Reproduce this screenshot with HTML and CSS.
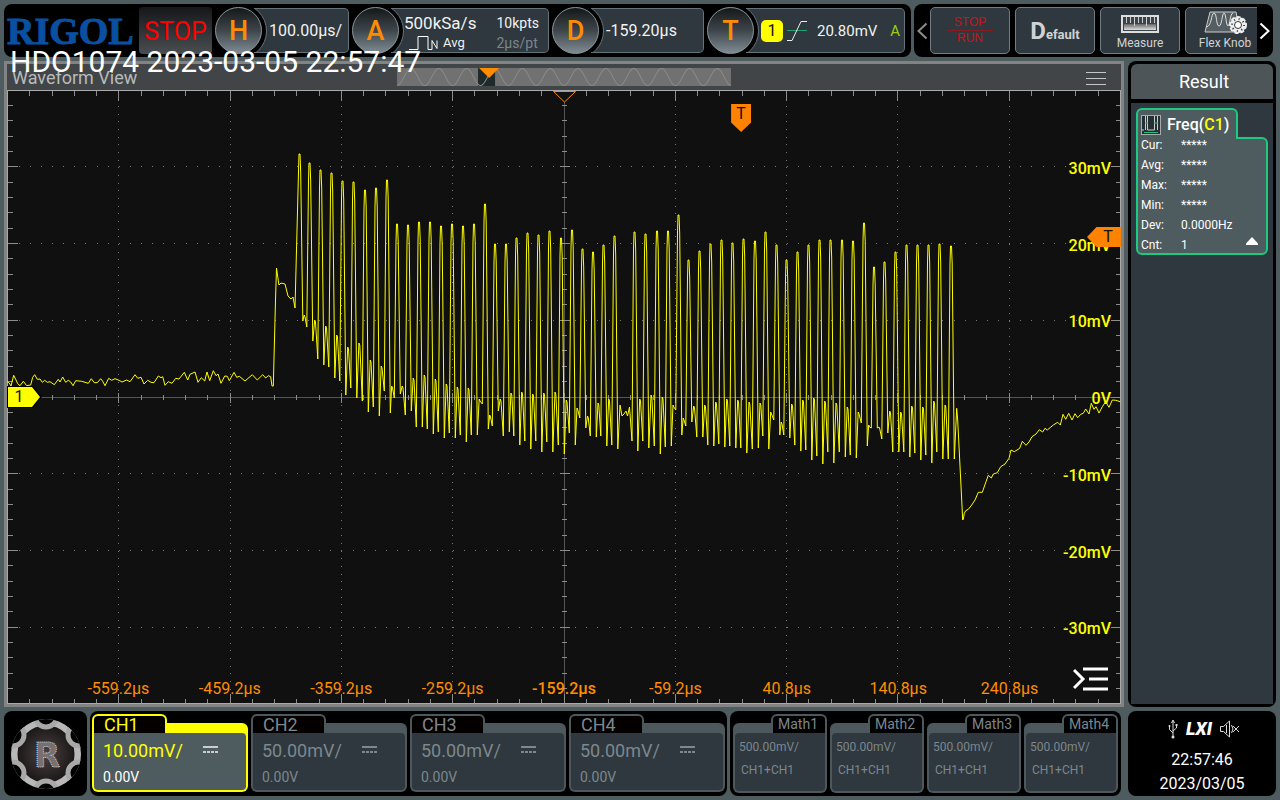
FILE: index.html
```html
<!DOCTYPE html>
<html lang="en">
<head>
<meta charset="utf-8">
<title>RIGOL HDO1074</title>
<link rel="stylesheet" href="styles.css">
</head>
<body>
<div class="stamp">HDO1074 2023-03-05 22:57:47</div>

<header class="top">
  <div class="bar settings">
    <span class="brand">RIGOL</span>
    <button class="run-state">STOP</button>
    <button class="unit"><span class="knob">H</span><span class="panel"><span>100.00µs/</span></span></button>
    <button class="unit"><span class="knob">A</span><span class="panel acquire">
      <span class="rate">500kSa/s</span><span class="depth">10kpts</span>
      <span class="mode"><svg width="30" height="16" viewBox="0 0 30 16"><path d="M0 14.500h9v-13h10v13M23 14.500v-9l5 8v-8M19 14.500h4" fill="none" stroke="#fff"/></svg>Avg</span><span class="res">2µs/pt</span>
    </span></button>
    <button class="unit"><span class="knob">D</span><span class="panel"><span>-159.20µs</span></span></button>
    <button class="unit"><span class="knob">T</span><span class="panel trigger"><span class="source">1</span><svg width="20" height="22" viewBox="0 0 20 22"><path d="M0 10.500h20" stroke="#20a070"/><path d="M0 20.500h5L14 1.500h6" fill="none" stroke="#eee"/></svg><span class="level">20.80mV</span><span class="sweep">A</span></span></button>
  </div>
  <nav class="bar tools">
    <button class="arrow" aria-label="Previous"><svg width="11" height="18" viewBox="0 0 11 18"><path d="M9.500 1.500L1.500 9l8 7.500" fill="none" stroke="#8d8d8d" stroke-width="2"/></svg></button>
    <div class="strip">
      <button class="tool stoprun"><span>STOP</span><span>RUN</span></button>
      <button class="tool default"><span class="big">D</span><span>efault</span></button>
      <button class="tool"><svg width="38" height="18" viewBox="0 0 38 18"><defs><linearGradient id="sil" x1="0" y1="0" x2="0" y2="1"><stop offset="0" stop-color="#666"/><stop offset="1" stop-color="#ddd"/></linearGradient></defs><rect x="1" y="1" width="36" height="16" fill="#39434a" stroke="#ddd" stroke-width="2"/><rect x="3" y="9" width="32" height="6" fill="url(#sil)"/><path d="M5.500 2v6M9.500 2v6M13.500 2v9M17.500 2v6M21.500 2v6M25.500 2v9M29.500 2v6M33.500 2v6" stroke="#ccc"/></svg><span>Measure</span></button>
      <button class="tool"><svg width="44" height="24" viewBox="0 0 44 24"><path d="M6 1h26l4 20H1z" fill="#555e62" stroke="#ccc"/><path d="M2 16c6 0 5-14 8-14s2 13 5 13 3-13 5-13 2 13 4 13 2-13 5-13" fill="none" stroke="#ddd"/><circle cx="34" cy="14" r="8" fill="#eee"/><circle cx="34" cy="14" r="8" fill="none" stroke="#eee" stroke-width="2" stroke-dasharray="4 2"/><circle cx="34" cy="14" r="6" fill="none" stroke="#2e383d" stroke-dasharray="1 3.700" stroke-width="2"/><circle cx="34" cy="14" r="3.500" fill="#fff" stroke="#2e383d"/></svg><span>Flex Knob</span></button>
    </div>
    <button class="arrow" aria-label="Next"><svg width="11" height="18" viewBox="0 0 11 18"><path d="M1.500 1.500L9.500 9l-8 7.500" fill="none" stroke="#fff" stroke-width="2"/></svg></button>
  </nav>
</header>

<main class="middle">
  <section class="view">
    <div class="view-head">
      <span class="view-title">Waveform View</span>
      <svg class="overview" viewBox="0 0 334 18" preserveAspectRatio="none">
        <rect width="334" height="18" fill="#717171"/>
        <rect x="81" width="17" height="18" fill="#1e292c"/>
        <path id="sine" fill="none" stroke="#8a8a8a"/>
        <path d="M82 0h20L92 10z" fill="#ff8c00"/>
      </svg>
      <button class="menu" aria-label="View menu"><svg width="20" height="14" viewBox="0 0 20 14"><path d="M0 1.500h20M0 7.500h20M0 13.500h20" stroke="#c4c6c7" stroke-width="1"/></svg></button>
    </div>
    <div class="plot">
      <svg class="scope" viewBox="7 90 1114 614" preserveAspectRatio="none">
        <g id="grid"></g>
        <path id="wave" fill="none" stroke="#ff0" stroke-width="1" stroke-linejoin="round"/>
        <path d="M553.500 91.500h22L564.500 102z" fill="#101010" stroke="#ff8c00"/>
      </svg>
      <div id="labels"></div>
      <span class="tag trig-time">T</span>
      <span class="tag trig-level">T</span>
      <span class="ch-marker"><span class="tag">1</span></span>
      <button class="list" aria-label="Open list"><svg width="36" height="26" viewBox="0 0 36 26"><path d="M1 4l9 9-9 9M10 3h25M16 13h19M10 23h25" fill="none" stroke="#fff" stroke-width="3"/></svg></button>
    </div>
  </section>
  <aside class="results">
    <h2>Result</h2>
    <div class="results-body">
      <div class="meas-tab">
        <svg width="20" height="20" viewBox="0 0 20 20"><rect x=".5" y=".5" width="19" height="19" fill="#263034" stroke="#aaa"/><path d="M1 15h2M4.500 1v14M6.500 1v14h7V1M16.500 1v14" fill="none" stroke="#ccc"/><path d="M3 17.500h14M4 8h3M13 8h4" stroke="#20c080"/></svg>
        <span>Freq(<b>C1</b>)</span>
      </div>
      <div class="meas">
        <table>
          <tr><th>Cur:</th><td>*****</td></tr>
          <tr><th>Avg:</th><td>*****</td></tr>
          <tr><th>Max:</th><td>*****</td></tr>
          <tr><th>Min:</th><td>*****</td></tr>
          <tr><th>Dev:</th><td>0.0000Hz</td></tr>
          <tr><th>Cnt:</th><td>1</td></tr>
        </table>
        <svg class="fold" width="12" height="8" viewBox="0 0 12 8"><path d="M6 0l6 6.500V8H0V6.500z" fill="#fff"/></svg>
      </div>
    </div>
  </aside>
</main>

<footer class="bottom">
  <button class="home" aria-label="Home"><svg width="72" height="72" viewBox="0 0 72 72">
    <defs>
      <radialGradient id="core"><stop offset="0" stop-color="#4a4242"/><stop offset="1" stop-color="#171313"/></radialGradient>
      <clipPath id="rim"><circle cx="36" cy="36" r="35"/></clipPath>
    </defs>
    <g clip-path="url(#rim)">
      <circle cx="36" cy="36" r="32" fill="url(#core)" stroke="#b8b8b8" stroke-width="7"/>
      <g fill="#000" stroke="#a8a8a8" stroke-width="5">
        <circle cx="36" cy="-2" r="11"/><circle cx="69" cy="17" r="11"/><circle cx="69" cy="55" r="11"/>
        <circle cx="36" cy="74" r="11"/><circle cx="3" cy="55" r="11"/><circle cx="3" cy="17" r="11"/>
      </g>
    </g>
    <text x="37" y="49" text-anchor="middle" class="gear-letter">R</text>
  </svg></button>
  <div class="bar cards channels">
    <button class="card active"><span class="tab">CH1</span><span class="body"><span class="scale">10.00mV/</span><i class="dc"></i><span class="offset">0.00V</span></span></button>
    <button class="card"><span class="tab">CH2</span><span class="body"><span class="scale">50.00mV/</span><i class="dc"></i><span class="offset">0.00V</span></span></button>
    <button class="card"><span class="tab">CH3</span><span class="body"><span class="scale">50.00mV/</span><i class="dc"></i><span class="offset">0.00V</span></span></button>
    <button class="card"><span class="tab">CH4</span><span class="body"><span class="scale">50.00mV/</span><i class="dc"></i><span class="offset">0.00V</span></span></button>
  </div>
  <div class="bar cards maths">
    <button class="card math"><span class="tab">Math1</span><span class="body"><span>500.00mV/</span><span class="expr">CH1+CH1</span></span></button>
    <button class="card math"><span class="tab">Math2</span><span class="body"><span>500.00mV/</span><span class="expr">CH1+CH1</span></span></button>
    <button class="card math"><span class="tab">Math3</span><span class="body"><span>500.00mV/</span><span class="expr">CH1+CH1</span></span></button>
    <button class="card math"><span class="tab">Math4</span><span class="body"><span>500.00mV/</span><span class="expr">CH1+CH1</span></span></button>
  </div>
  <div class="bar status">
    <div class="status-icons">
      <svg width="10" height="20" viewBox="0 0 10 20"><path d="M5 2v16M1.500 7v3.500L5 14M8.500 6v3L5 12M3.500 4L5 1l1.500 3" fill="none" stroke="#ddd"/><circle cx="5" cy="18" r="1.500" fill="#ddd"/><circle cx="1.500" cy="7" r="1" fill="#ddd"/><path d="M7.500 5h2v2h-2z" fill="#ddd"/></svg>
      <span class="lxi">LXI</span>
      <svg width="20" height="18" viewBox="0 0 20 18"><path d="M.5 6.500h3l6-5.500v16l-6-5.500h-3zM6.500 5v8M11.500 5q3 4 0 8M13 6l6 6M19 6l-6 6" fill="none" stroke="#ddd"/></svg>
    </div>
    <span>22:57:46</span>
    <span>2023/03/05</span>
  </div>
</footer>
<script src="scope.js"></script>
</body>
</html>
```
FILE: styles.css
```css
* { box-sizing: border-box; }
html { height: 100%; }
body {
  margin: 0; min-height: 100%; height: 100vh; padding: 4px;
  display: flex; flex-direction: column; gap: 4px;
  background: #4e5b5f; color: #fff; overflow: hidden;
  font-family: Roboto, "Noto Sans", sans-serif; font-size: 16px; line-height: 20px;
}
button { font: inherit; color: inherit; background: none; border: 0; padding: 0; text-align: left; }
svg { display: block; flex: none; }
.stamp { position: absolute; left: 10px; top: 44px; font-size: 30px; line-height: 36px; z-index: 5; }
.bar { background: #000; border-radius: 8px; min-width: 0; }

/* top row */
.top { display: grid; grid-template-columns: 907fr 359fr; gap: 3px; height: 53px; padding-right: 3px; }
.settings {
  display: grid; gap: 3px; align-items: center; padding: 3px 6px 3px 3px;
  grid-template-columns: 129px 73px 134fr 197fr 152fr 198fr;
}
.brand { font: bold 38px/46px "Liberation Serif", serif; color: #0a50a1; -webkit-text-stroke: 1px #0a50a1; }
.run-state {
  height: 47px; padding-top: 2px; text-align: center; font-size: 25px; color: #f00; border-radius: 4px;
  background: linear-gradient(#15171a, #4a4e51);
}
.unit { display: flex; align-items: center; min-width: 0; }
.knob {
  position: relative; z-index: 1; flex: none; width: 47px; height: 47px; border-radius: 50%;
  border: 1px solid #8b979c; background: linear-gradient(#15181a, #3e464b 50%, #7f8b92);
  color: #ff8c00; font-size: 27px; font-weight: 500; line-height: 47px; text-align: center;
}
.panel {
  position: relative; flex: 1; height: 45px; margin-left: -8px; padding-left: 15px; overflow: hidden;
  display: flex; align-items: center; border: 1px solid #65747a; border-left: 0; border-radius: 0 5px 5px 0;
  background: #2e383e; color: #f2f2f2;
}
.panel::before {
  content: ""; position: absolute; left: -43px; top: -6px; width: 54px; height: 54px;
  border: 1px solid #65747a; border-radius: 50%; background: #000;
}
.panel.acquire { display: grid; grid-template-columns: 1fr auto; padding: 4px 9px 0 13px; align-content: center; align-items: center; white-space: nowrap; }
.rate { font-size: 17px; position: relative; }
.depth, .res { font-size: 14px; }
.res { color: #7b868c; }
.mode { display: flex; gap: 4px; align-items: center; padding-left: 5px; font-size: 13px; line-height: 18px; }
.panel.trigger { font-size: 15px; gap: 4px; }
.source {
  width: 22px; height: 22px; border-radius: 5px; background: #ff0; color: #111; text-align: center;
  font-size: 16px; line-height: 22px; position: relative;
}
.level { margin-left: 6px; }
.sweep { color: #9acd14; margin-left: auto; margin-right: 4px; }

.tools { display: flex; align-items: center; gap: 2px; padding: 3px; }
.strip { flex: 1; display: flex; gap: 5px; overflow: hidden; }
.tool {
  flex: 0 0 80px; height: 47px; border: 1px solid #707e84; border-radius: 5px; background: #2e383e;
  display: flex; flex-direction: column; align-items: center; justify-content: flex-end;
  padding-bottom: 2px; font-size: 12px; line-height: 15px; color: #d0d3d4;
}
.tool svg { margin-bottom: 3px; }
.tool:last-child svg { margin: 0 0 1px 2px; }
.stoprun { font-family: "Liberation Sans", sans-serif; font-size: 12px; color: #c8141a; justify-content: center; padding: 0; }
.stoprun span { width: 46px; text-align: center; }
.stoprun span:first-child { border-bottom: 1px solid #8a1c20; }
.default { flex-direction: row; align-items: baseline; justify-content: center; padding: 9px 0 0; font-size: 13px; font-weight: 700; line-height: 28px; }
.default .big { font-size: 24px; }

/* waveform view */
.middle { flex: 1; display: flex; gap: 4px; min-height: 0; }
.view { flex: 1; min-width: 0; display: flex; flex-direction: column; border: 3px solid #838383; background: #101010; }
.view-head { height: 26px; background: #414547; display: grid; grid-template-columns: 1fr 30% 1fr; align-items: center; }
.view-title { padding: 2px 0 0 5px; font-size: 18px; color: #b8bbbc; }
.overview { width: 100%; height: 18px; }
.menu { justify-self: end; margin: 2px 15px 0 0; }
.plot { position: relative; flex: 1; min-height: 0; }
.scope { position: absolute; width: 100%; height: 100%; }
.x-label { position: absolute; bottom: 5px; transform: translateX(-50%); color: #ff8c00; }
.x-label.mid { font-weight: 500; }
.y-label { position: absolute; right: 10px; margin-top: -8px; color: #ff0; font-weight: 500; }
.tag { position: absolute; color: #111; text-align: center; background: #ff8200; line-height: 20px; }
.trig-time { left: 65%; top: 14px; width: 20px; height: 28px; clip-path: polygon(0 0, 100% 0, 100% 66%, 50% 100%, 0 66%); }
.trig-level { right: 0; top: 137px; width: 34px; height: 20px; padding-left: 8px; clip-path: polygon(0 50%, 28% 0, 100% 0, 100% 100%, 28% 100%); }
.ch-marker { position: absolute; left: 0; top: 296px; width: 35px; height: 22px; background: #000; clip-path: polygon(0 0, 75% 0, 100% 50%, 75% 100%, 0 100%); }
.ch-marker .tag { left: 1px; top: 1px; width: 32px; height: 20px; padding-right: 10px; background: #ff0; clip-path: polygon(0 0, 75% 0, 100% 50%, 75% 100%, 0 100%); }
.list { position: absolute; right: 12px; bottom: 12px; }

/* results */
.results { flex: 0 0 148px; display: flex; flex-direction: column; gap: 4px; padding: 3px; background: #000; border-radius: 8px; }
.results h2 { margin: 0; height: 35px; padding-left: 4px; font-size: 18px; font-weight: 400; line-height: 36px; text-align: center; background: #4d5558; border-radius: 6px 6px 0 0; }
.results-body { flex: 1; padding: 5px; background: #2e383e; }
.meas-tab {
  position: relative; z-index: 1; width: 102px; height: 31px; padding: 1px 3px; display: flex; gap: 6px; align-items: center;
  border: 2px solid #1dcb80; border-bottom: 0; border-radius: 6px 6px 0 0; background: #4e5b5f; font-weight: 500; white-space: nowrap;
}
.meas-tab b { font-weight: 500; color: #ff0; }
.meas { position: relative; margin-top: -2px; border: 2px solid #1dcb80; border-radius: 0 6px 6px 6px; background: #4e5b5f; font-size: 12px; }
.meas table { border-collapse: collapse; margin: -4px 0 -2px; position: relative; z-index: 2; }
.meas th { width: 43px; padding: 0 0 0 3px; font-weight: 400; text-align: left; line-height: 20px; }
.meas td { padding: 0; line-height: 20px; }
.fold { position: absolute; right: 8px; bottom: 8px; }

/* bottom row */
.bottom { display: grid; grid-template-columns: 83px 637fr 391fr 152px; gap: 3px; height: 85px; }
.home { background: #000; border-radius: 8px; display: flex; align-items: center; justify-content: center; }
.gear-letter { font: bold 34px "DejaVu Sans", sans-serif; fill: #77706f; stroke: #ccc; stroke-dasharray: 1 1; }
.cards { display: flex; gap: 3px; }
.channels { padding: 3px 2px 4px; }
.maths { padding: 3px; }
.card { --edge: #4d585d; position: relative; flex: 1 1 0; min-width: 0; display: flex; flex-direction: column; color: #7d878d; }
.card::before { content: ""; position: absolute; inset: 9px 0 0; background: var(--edge); border-radius: 6px; }
.card.active { --edge: #ff0; color: #ff0; }
.tab {
  position: relative; height: 19px; width: 75px; padding-left: 10px; font-size: 18px; line-height: 18px;
  border: 2px solid var(--edge); border-bottom: 0; border-radius: 6px 6px 0 0; background: #050000;
}
.body {
  position: relative; flex: 1; margin: 0 2px 2px; padding: 7px 9px 4px; background: #2e383e; border-radius: 0 4px 4px 4px;
  display: grid; grid-template-columns: auto 1fr; column-gap: 20px; align-content: space-between;
}
.active .body { background: #4e5b5f; }
.scale { font-size: 18px; line-height: 21px; }
.offset { font-size: 14px; line-height: 18px; }
.active .offset { color: #fff; }
.dc { width: 15px; height: 7px; margin-top: 6px; border-top: 2px solid currentColor; background: repeating-linear-gradient(90deg, currentColor 0 3px, transparent 3px 4px) bottom / 100% 2px no-repeat; }
.active .dc { color: #ccc; }
.math .tab { align-self: flex-end; width: 56px; padding: 0 0 0 5px; font-size: 14px; line-height: 17px; background: #000; }
.math .body { border-radius: 4px 0 4px 4px; display: block; padding: 5px 4px; font-size: 12px; }
.math .body span { display: block; line-height: 19px; }
.math .expr { padding: 4px 0 0 2px; }
.status { margin-left: 4px; display: flex; flex-direction: column; align-items: center; padding: 7px 0 0; }
.status-icons { display: flex; gap: 8px; align-items: center; height: 22px; margin: 0 0 8px 4px; }
.status > span { line-height: 24px; height: 24px; }
.lxi { font-size: 18px; font-weight: 900; font-style: italic; line-height: 20px; }
```
FILE: scope.js
```js
const NS = 'http://www.w3.org/2000/svg';
const X0 = 7.5, X1 = 1120.5, Y0 = 90.5, Y1 = 703.5;
const CX = 564.5, CY = 397.5, DX = 111.3, DY = 76.7;
const grid = document.getElementById('grid');

function line(d, color, dash) {
  const p = document.createElementNS(NS, 'path');
  p.setAttribute('d', d);
  p.setAttribute('fill', 'none');
  p.setAttribute('stroke', color);
  p.setAttribute('shape-rendering', 'crispEdges');
  if (dash) p.setAttribute('stroke-dasharray', dash);
  grid.appendChild(p);
}

// dotted divisions
for (let i = -4; i <= 4; i++) {
  if (i) line(`M${Math.round(CX + i * DX) - 0.5} ${Y0}V${Y1}`, '#777', '1 6.67');
}
for (let j = -3; j <= 3; j++) {
  if (j) line(`M${X0} ${Math.round(CY + j * DY) - 0.5}H${X1}`, '#777', '1 10.13');
}
// centre axes
line(`M${X0} ${CY}H${X1}M${CX} ${Y0}V${Y1}`, '#555');
// ticks along frame and axes
let ticks = '';
for (let k = -25; k <= 25; k++) {
  const x = Math.round(CX + k * DX / 5) - 0.5, big = k % 5 === 0, l = big ? 10 : 5, h = big ? 5 : 2.5;
  ticks += `M${x} ${Y0}v${l}M${x} ${Y1}v${-l}M${x} ${CY - h}v${2 * h}`;
}
for (let k = -20; k <= 20; k++) {
  const y = Math.round(CY + k * DY / 5) - 0.5, big = k % 5 === 0, l = big ? 10 : 5, h = big ? 5 : 2.5;
  ticks += `M${X0} ${y}h${l}M${X1} ${y}h${-l}M${CX - h} ${y}h${2 * h}`;
}
line(ticks, '#8c8c8c');
line(`M${X0} ${Y0}H${X1}V${Y1}H${X0}Z`, '#aaa');

// baseline samples before the burst, in thirds of a unit
const lead = [22,125,27,128,33,138,41,106,48,120,53,131,60,137,70,124,80,137,92,135,98,112,104,104,112,118,120,117,127,127,134,121,142,127,150,125,163,134,175,118,180,126,188,111,197,127,205,121,212,126,219,137,227,122,245,124,265,130,274,116,283,128,292,128,302,116,308,124,315,137,326,115,335,121,345,116,357,121,366,126,380,120,390,125,405,104,413,115,423,112,432,132,443,121,453,127,462,128,475,108,483,113,488,110,495,136,505,125,516,130,527,115,537,117,553,97,563,120,570,103,585,96,594,127,604,113,614,123,621,96,629,122,640,92,648,107,654,102,663,130,674,108,682,109,688,122,702,97,710,112,718,109,735,123,757,104,772,120,788,104,797,114,805,107,812,110,816,138,820,138];
// peak x, peak y, then first low, bump and second low
const burst = [
[299.5,154,321,315,327],[309.5,163,341,320,359],[320.5,170,365,326,367],[331.5,173,378,335,381],[342.5,181,395,347,388],
[353.5,182,398,343,401],[365,190,412,360,407],[376,188,416,366,391],[387,180,413,386,398],[397,224,394,386,415],
[408,225,411,378,427],[419,222,427,375,429],[430,222,434,379,432],[441,226,438,384,433],[452,224,438,387,435],
[463,226,442,388,435],[474,224,435,399,404],[485,204,429,415,426],[495,244,411,399,436],[506,244,432,393,436],
[516.5,238,445,392,441],[527.5,233,449,394,441],[538.5,235,452,393,442],[549.5,231,452,392,445],[561,238,454,400,433],
[572,230,445,408,418],[582.5,249,428,416,436],[593,252,437,403,436],[603.5,245,446,399,445],[614.5,236,449,405,416],
[634.5,232,451,399,441],[645.5,234,448,395,446],[657,231,454,397,447],[668,231,446,405,410],[678.5,215,435,418,426],
[688.5,260,422,406,437],[699.5,251,437,405,445],[710.5,244,446,402,444],[721.5,240,447,399,446],[732.5,243,448,400,448],
[743.5,239,453,402,449],[755,241,448,403,436],[765.5,232,449,412,420],[776.5,245,435,422,435],[786.5,260,438,404,445],
[797.5,252,451,400,450],[808.5,245,460,398,456],[819.5,240,464,401,452],[830.5,240,463,403,452],[842,240,457,407,455],
[853,241,458,412,423],[864,223,446,425,428],[874,267,428,427,439],[884.5,262,433,411,452],[895.5,252,452,412,452],
[906.5,245,457,406,453],[917.5,245,460,407,455],[928.5,245,463,401,452],[939.5,244,459,405,459],[951,246,459,0,0]];
// recovery after the burst, in thirds of a unit
const tail = [20,85,23,120,38,420,40,418,43,400,47,392,55,388,65,375,75,360,85,337,97,337,108,305,115,286,124,294,130,282,142,278,152,260,165,252,177,235,183,210,193,215,209,205,217,184,228,196,237,186,246,170,258,162,268,149,278,156,285,145,292,150,310,135,323,127,331,135,339,103,347,118,356,100,366,120,375,101,383,113,392,103,400,100,407,87,417,102,424,70,432,88,438,80,447,99,457,80,467,65,477,82,487,60,497,61,511,65];

const pts = [];
for (let i = 0; i < lead.length; i += 2) pts.push([lead[i] / 3, 340 + lead[i + 1] / 3]);
pts.push([275.5,300],[276.5,268],[278.5,282],[279,285],[281,283],[285,284],[288,296],[291,299],[293,297],[295,308]);
burst.forEach(([x, top, a, b, c], i) => {
  pts.push([x - 1, top + 18], [x - 0.5, top], [x + 0.5, top], [x + 1.2, top + 18], [x + 3.3, a]);
  if (!b) return;
  if (x === 614.5) {
    pts.push([620,405],[622,416],[624,414],[626,411],[627.5,416],[629.5,407],[632,441]);
    return;
  }
  const step = burst[i + 1][0] - x;
  pts.push([x + step / 2 - 0.3, b], [x + step / 2 + 0.5, b + 2], [x + step - 2.7, c]);
});
for (let i = 0; i < tail.length; i += 2) pts.push([950 + tail[i] / 3, 380 + tail[i + 1] / 3]);
document.getElementById('wave').setAttribute('d', 'M' + pts.map(p => p[0].toFixed(1) + ' ' + p[1].toFixed(1)).join('L'));

// whole-memory overview
let sine = 'M0 17.5';
for (let x = 1; x <= 334; x++) sine += `L${x} ${(9 + 8.5 * Math.cos(x / 334 * 12 * 2 * Math.PI)).toFixed(1)}`;
document.getElementById('sine').setAttribute('d', sine);

// axis labels
const labels = document.getElementById('labels');
['-559.2µs','-459.2µs','-359.2µs','-259.2µs','-159.2µs','-59.2µs','40.8µs','140.8µs','240.8µs'].forEach((t, i) => {
  const s = document.createElement('span');
  s.className = 'x-label' + (i === 4 ? ' mid' : '');
  s.textContent = t;
  s.style.left = (i + 1) * 10 + '%';
  labels.appendChild(s);
});
['30mV','20mV','10mV','0V','-10mV','-20mV','-30mV'].forEach((t, i) => {
  const s = document.createElement('span');
  s.className = 'y-label';
  s.textContent = t;
  s.style.top = (i + 1) * 12.5 + '%';
  labels.appendChild(s);
});
```
